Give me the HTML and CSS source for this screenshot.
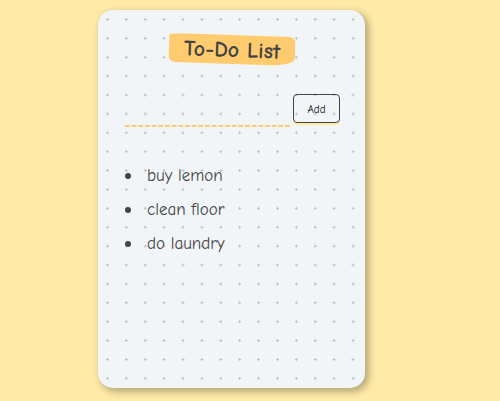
FILE: index.html
```html
<!DOCTYPE html>
<html lang="en">
<head>
  <meta charset="utf-8">
  <title>To-Do List</title>
  <link rel="stylesheet" href="styles.css">
</head>
<body>
  <main class="container">
    <h1 class="title">To-Do List</h1>
    <form class="form">
      <input class="form-input" type="text" aria-label="New item">
      <button class="form-button" type="button">Add</button>
    </form>
    <ul class="list">
      <li>buy lemon</li>
      <li>clean floor</li>
      <li>do laundry</li>
    </ul>
  </main>
</body>
</html>
```

FILE: styles.css
```css
* {
  box-sizing: border-box;
}

body {
  margin: 0;
  min-height: 100vh;
  display: flex;
  padding: 10px 16px 13px 98px;
  background: #ffeaa7;
  color: #444;
  font-family: "Comic Sans MS", "Comic Neue", "Noto Sans", sans-serif;
  font-variant-ligatures: none;
}

.container {
  flex: 1;
  max-width: 267px;
  padding: 25px 25px 24px 27px;
  border-radius: 15px;
  background-color: #f1f5f8;
  background-image: radial-gradient(#bfc0c1 1px, transparent 1px);
  background-size: 7.08% 5%;
  box-shadow: 3px 3px 7px 1px rgba(0, 0, 0, 0.28);
}

.title {
  width: fit-content;
  margin: 0 auto;
  padding: 1px 15px 0;
  background: #fecb6e;
  border-radius: 20% 5% 20% 5% / 5% 20% 25% 20%;
  font-size: 22px;
  line-height: 28px;
  white-space: nowrap;
  transform: rotate(2deg);
}

.form {
  display: flex;
  align-items: flex-start;
  gap: 1px;
  margin-top: 30px;
}

.form-input {
  flex: 1;
  min-width: 0;
  height: 33px;
  padding: 4px;
  border: 0;
  outline: 0;
  background: linear-gradient(90deg, #fecb6e 75%, transparent 75%) 0 100% / 4% 2px repeat-x;
  color: inherit;
  font: inherit;
}

.form-button {
  width: 47px;
  height: 29px;
  padding: 2px 0 0;
  border: 1px solid #444;
  border-radius: 4px;
  background: transparent;
  box-shadow: 0 2px 0 #ffeaa7;
  color: #111;
  font-family: inherit;
  font-size: 11px;
}

.list {
  margin: 32px 0 0;
  padding: 0;
  list-style: none;
  font-size: 17px;
  line-height: 34px;
}

.list li {
  display: flex;
  align-items: center;
  gap: 16px;
}

.list li::before {
  content: "";
  width: 6px;
  height: 6px;
  border-radius: 50%;
  background: #444;
}
```
